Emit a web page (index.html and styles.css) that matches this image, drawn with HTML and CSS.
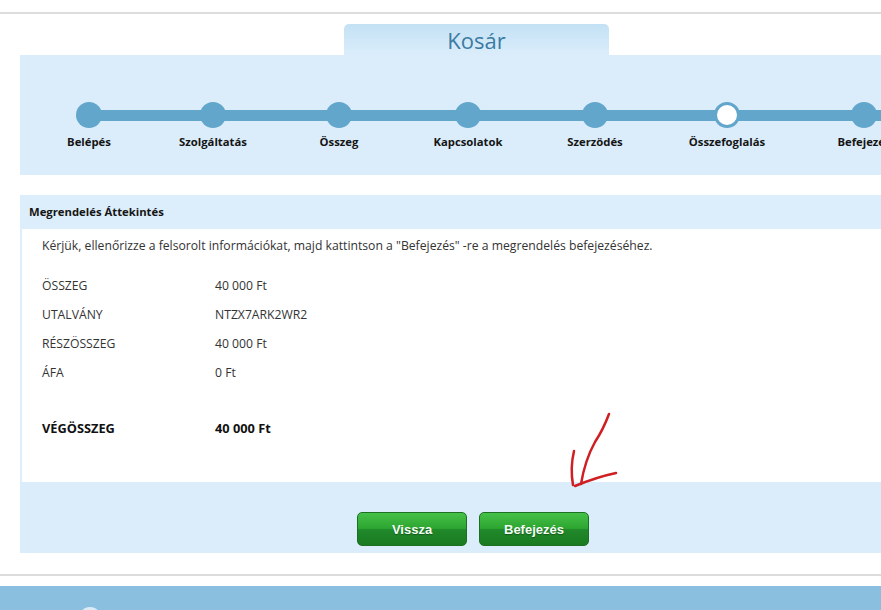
FILE: index.html
```html
<!DOCTYPE html>
<html lang="hu">

<head>
    <meta charset="UTF-8">
    <meta name="viewport" content="width=device-width, initial-scale=1.0">
    <title>Kosár</title>
    <link rel="stylesheet" href="styles.css">
</head>

<body>
    <div class="top-rule"></div>

    <div class="page">
        <!-- Kosár fül -->
        <div class="cart-tab">Kosár</div>

        <!-- rendelési lépések -->
        <div class="steps-panel">
            <ol class="steps">
                <li class="step"><span class="dot"></span><span class="step-label">Belépés</span></li>
                <li class="step"><span class="dot"></span><span class="step-label">Szolgáltatás</span></li>
                <li class="step"><span class="dot"></span><span class="step-label">Összeg</span></li>
                <li class="step"><span class="dot"></span><span class="step-label">Kapcsolatok</span></li>
                <li class="step"><span class="dot"></span><span class="step-label">Szerzödés</span></li>
                <li class="step current"><span class="dot"></span><span class="step-label">Összefoglalás</span></li>
                <li class="step"><span class="dot"></span><span class="step-label">Befejezés</span></li>
            </ol>
        </div>

        <!-- megrendelés áttekintés -->
        <div class="summary">
            <div class="summary-head">Megrendelés Áttekintés</div>
            <div class="summary-body">
                <p class="intro">Kérjük, ellenőrizze a felsorolt információkat, majd kattintson a "Befejezés" -re a megrendelés befejezéséhez.</p>
                <table class="totals">
                    <tr><td>ÖSSZEG</td><td>40 000 Ft</td></tr>
                    <tr><td>UTALVÁNY</td><td>NTZX7ARK2WR2</td></tr>
                    <tr><td>RÉSZÖSSZEG</td><td>40 000 Ft</td></tr>
                    <tr><td>ÁFA</td><td>0 Ft</td></tr>
                    <tr class="spacer"><td colspan="2"></td></tr>
                    <tr class="grand"><td>VÉGÖSSZEG</td><td>40 000 Ft</td></tr>
                </table>
            </div>
            <div class="summary-actions">
                <button class="green-btn">Vissza</button>
                <button class="green-btn">Befejezés</button>
            </div>

            <!-- kézzel rajzolt nyíl a Befejezés gomb fölött -->
            <svg class="scribble" width="60" height="84" viewBox="0 0 60 84">
                <path d="M44 6 Q38 22 30 34 Q20 52 16 76" />
                <path d="M9 43 Q5 60 8 77" />
                <path d="M51 65 Q32 69 10 78" />
            </svg>
        </div>
    </div>

    <div class="bottom-rule"></div>
    <div class="footer-band"><span class="footer-dot"></span></div>
</body>

</html>
```

FILE: styles.css
```css
/* alap */
html,
body {
    overflow: hidden;
}

body {
    margin: 0;
    font-family: "Open Sans", "Noto Sans", sans-serif;
    color: #2b2b2b;
    background-color: #fff;
}

/* vízszintes elválasztó vonalak */
.top-rule {
    margin-top: 12px;
    height: 2px;
    background-color: #dcdcdc;
}

.bottom-rule {
    margin-top: 21px;
    height: 2px;
    background-color: #dcdcdc;
}

/* tartalom */
.page {
    width: 906px;
    margin-left: 20px;
}

/* Kosár fül */
.cart-tab {
    width: 265px;
    height: 31px;
    margin: 10px 0 0 324px;
    border-radius: 5px 5px 0 0;
    background: linear-gradient(#c3e1f4, #dbedfb);
    color: #3b7ba3;
    font-size: 22px;
    line-height: 33px;
    text-align: center;
}

/* lépések sávja */
.steps-panel {
    position: relative;
    height: 120px;
    background-color: #dbedfb;
}

.steps-panel::before {
    content: "";
    position: absolute;
    left: 69px;
    right: 0;
    top: 55px;
    height: 11px;
    background-color: #62a6cc;
}

.steps {
    position: relative;
    display: grid;
    grid-template-columns: 126px 122px 130px 128px 126px 138px 136px;
    margin: 0;
    padding: 47px 0 0 6px;
    list-style: none;
}

.step {
    display: flex;
    flex-direction: column;
    align-items: center;
}

.dot {
    width: 26px;
    height: 26px;
    border-radius: 50%;
    background-color: #62a6cc;
    box-sizing: border-box;
}

.step.current .dot {
    background-color: #fff;
    border: 3px solid #62a6cc;
}

.step-label {
    margin-top: 6px;
    font-size: 11.3px;
    font-weight: bold;
    line-height: 16px;
    color: #151515;
    white-space: nowrap;
}

/* megrendelés áttekintés */
.summary {
    position: relative;
    margin-top: 20px;
}

.summary-head {
    height: 34px;
    padding-left: 9px;
    background-color: #dcedfb;
    font-size: 11.3px;
    font-weight: bold;
    line-height: 34px;
    color: #151515;
}

.summary-body {
    height: 253px;
    box-sizing: border-box;
    padding: 8px 0 0 20px;
    border-left: 2px solid #dcedfb;
    font-size: 12.2px;
}

.intro {
    margin: 0 0 16px;
    line-height: 18px;
    color: #333;
}

.totals {
    border-collapse: collapse;
}

.totals td {
    height: 29px;
    padding: 0;
    color: #333;
}

.totals td:first-child {
    width: 173px;
}

.totals .spacer td {
    height: 26px;
}

.totals .grand td {
    font-weight: bold;
    font-size: 12.8px;
    color: #111;
}

/* gombok sávja */
.summary-actions {
    display: flex;
    justify-content: center;
    gap: 12px;
    height: 71px;
    box-sizing: border-box;
    padding-top: 30px;
    background-color: #dbedfb;
}

.green-btn {
    width: 110px;
    height: 34px;
    padding: 0;
    border: 1px solid #1d6f22;
    border-radius: 5px;
    background: linear-gradient(#45c048 0%, #2da631 48%, #20892a 52%, #1a7a20 100%);
    color: #f4fff4;
    font-family: "Liberation Sans", Arial, sans-serif;
    font-size: 13px;
    font-weight: bold;
    text-shadow: 0 1px 1px rgba(0, 0, 0, 0.35);
    cursor: pointer;
}

.green-btn:hover {
    background: linear-gradient(#56cf59 0%, #37b23b 48%, #27992e 52%, #1e8325 100%);
}

/* piros nyíl */
.scribble {
    position: absolute;
    left: 545px;
    top: 213px;
    fill: none;
    stroke: #cf1f22;
    stroke-width: 2.5;
    stroke-linecap: round;
    stroke-linejoin: round;
}

/* lábléc */
.footer-band {
    position: relative;
    height: 30px;
    margin-top: 10px;
    background-color: #8bbfdf;
    overflow: hidden;
}

.footer-dot {
    position: absolute;
    left: 79px;
    top: 21px;
    width: 22px;
    height: 22px;
    border-radius: 50%;
    background-color: #dcecf7;
}
```
